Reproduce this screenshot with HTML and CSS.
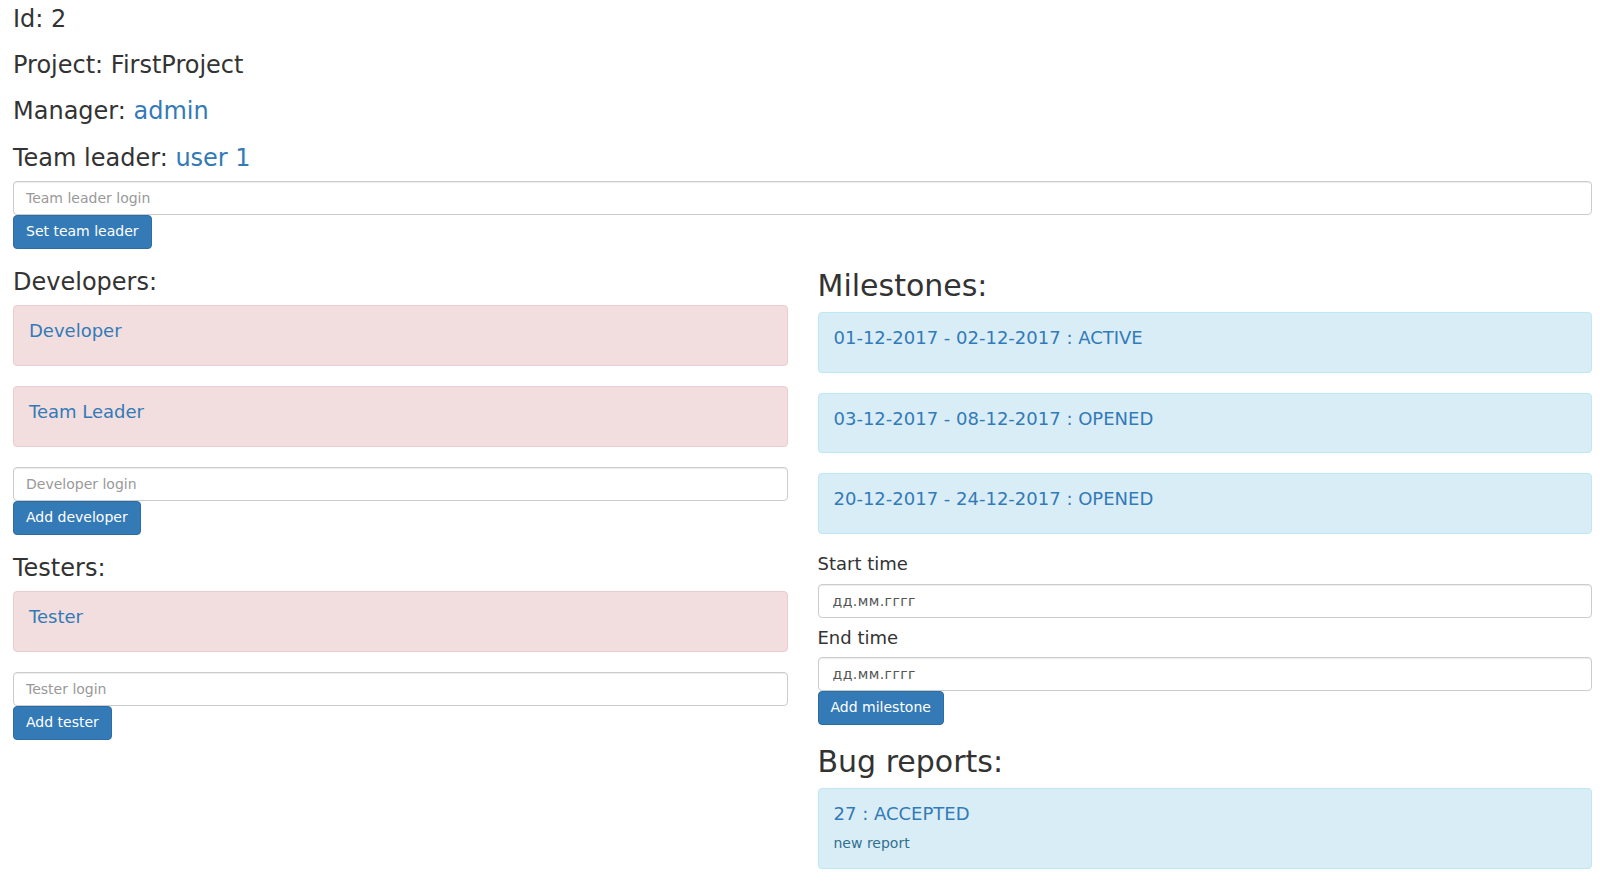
FILE: index.html
```html
<!DOCTYPE html>
<html lang="en">
<head>
<meta charset="utf-8">
<title>Project 2</title>
<link rel="stylesheet" href="styles.css">
</head>
<body>
<div class="page">
  <h3 class="heading first">Id: 2</h3>
  <h3 class="heading">Project: FirstProject</h3>
  <h3 class="heading">Manager: <a class="link" href="#">admin</a></h3>
  <h3 class="heading">Team leader: <a class="link" href="#">user 1</a></h3>
  <form class="stack">
    <input class="field" type="text" placeholder="Team leader login">
    <button class="btn" type="button">Set team leader</button>
  </form>

  <div class="columns">
    <section class="col">
      <h3 class="heading">Developers:</h3>
      <div class="alert danger"><h4 class="alert-title"><a class="link" href="#">Developer</a></h4></div>
      <div class="alert danger"><h4 class="alert-title"><a class="link" href="#">Team Leader</a></h4></div>
      <form class="stack">
        <input class="field" type="text" placeholder="Developer login">
        <button class="btn" type="button">Add developer</button>
      </form>
      <h3 class="heading">Testers:</h3>
      <div class="alert danger"><h4 class="alert-title"><a class="link" href="#">Tester</a></h4></div>
      <form class="stack">
        <input class="field" type="text" placeholder="Tester login">
        <button class="btn" type="button">Add tester</button>
      </form>
    </section>

    <section class="col">
      <h2 class="heading big">Milestones:</h2>
      <div class="alert info"><h4 class="alert-title"><a class="link" href="#">01-12-2017 - 02-12-2017 : ACTIVE</a></h4></div>
      <div class="alert info"><h4 class="alert-title"><a class="link" href="#">03-12-2017 - 08-12-2017 : OPENED</a></h4></div>
      <div class="alert info"><h4 class="alert-title"><a class="link" href="#">20-12-2017 - 24-12-2017 : OPENED</a></h4></div>
      <form class="stack">
        <h4 class="label">Start time</h4>
        <input class="field date" type="text" placeholder="дд.мм.гггг">
        <h4 class="label">End time</h4>
        <input class="field date" type="text" placeholder="дд.мм.гггг">
        <button class="btn" type="button">Add milestone</button>
      </form>
      <h2 class="heading big">Bug reports:</h2>
      <div class="alert info">
        <h4 class="alert-title"><a class="link" href="#">27 : ACCEPTED</a></h4>
        <p class="note">new report</p>
      </div>
    </section>
  </div>
</div>
</body>
</html>
```

FILE: styles.css
```css
html, body {
  margin: 0;
  padding: 0;
  background: #fff;
}

body {
  font-family: "DejaVu Sans", sans-serif;
  font-size: 14px;
  line-height: 1.42857;
  color: #333;
}

.page {
  padding: 0 8px 0 13px;
}

.heading {
  font-size: 24px;
  font-weight: normal;
  line-height: 1.1;
  margin: 20px 0 10px;
  color: #333;
}

.heading.first {
  margin-top: 5.5px;
}

.heading.big {
  font-size: 30px;
}

.link {
  color: #337ab7;
  text-decoration: none;
}

.stack {
  display: flex;
  flex-direction: column;
  align-items: flex-start;
  margin: 0;
}

.field {
  display: block;
  box-sizing: border-box;
  width: 100%;
  height: 34px;
  margin: 0;
  padding: 6px 12px;
  font-family: inherit;
  font-size: 14px;
  line-height: 1.42857;
  color: #555;
  background: #fff;
  border: 1px solid #ccc;
  border-radius: 4px;
  box-shadow: inset 0 1px 1px rgba(0, 0, 0, 0.075);
  outline: none;
}

.field::placeholder {
  color: #999;
  opacity: 1;
}

.field.date {
  padding-left: 14px;
  letter-spacing: 0.45px;
}

.field.date::placeholder {
  color: #555;
}

.btn {
  display: inline-block;
  box-sizing: border-box;
  height: 34px;
  margin: 0;
  padding: 6px 12px;
  font-family: inherit;
  font-size: 14px;
  line-height: 1.42857;
  color: #fff;
  background: #337ab7;
  border: 1px solid #2e6da4;
  border-radius: 4px;
  cursor: pointer;
  white-space: nowrap;
}

.columns {
  display: grid;
  grid-template-columns: 1fr 1fr;
  column-gap: 30px;
}

.col {
  min-width: 0;
}

.alert {
  padding: 15px;
  margin-bottom: 20px;
  border: 1px solid transparent;
  border-radius: 4px;
}

.alert.danger {
  background: #f2dede;
  border-color: #ebccd1;
  color: #a94442;
}

.alert.info {
  background: #d9edf7;
  border-color: #bce8f1;
  color: #31708f;
}

.alert-title {
  font-size: 18px;
  font-weight: normal;
  line-height: 1.1;
  margin: 0 0 8.8px;
}

.label {
  font-size: 18px;
  font-weight: normal;
  line-height: 1.1;
  margin: 10px 0;
  color: #333;
}

.stack > .label:first-child {
  margin-top: 0;
}

.note {
  margin: 0;
  font-size: 14px;
  line-height: 20px;
}
```
